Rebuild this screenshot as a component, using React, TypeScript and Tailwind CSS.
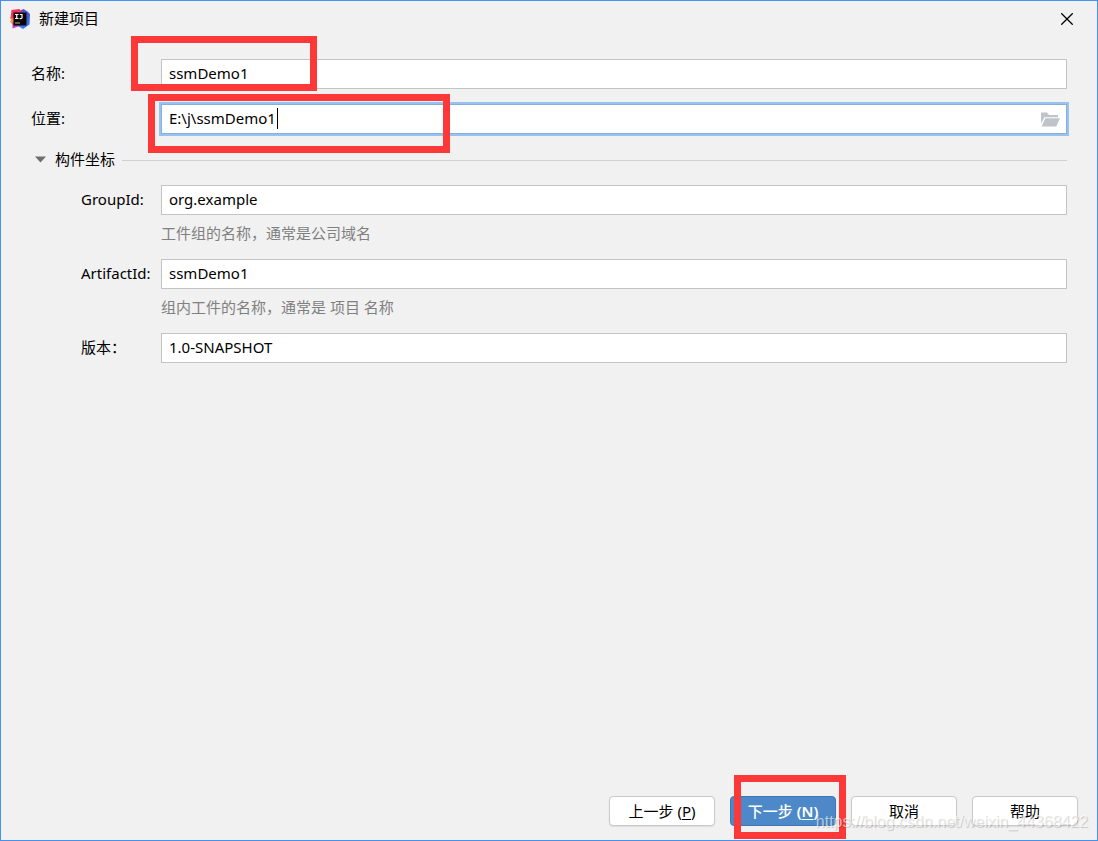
import { useState } from "react";
import type { ReactNode } from "react";

const fieldBase =
  "block h-[30px] w-full rounded-none border bg-white px-[7px] pb-[2px] text-[15px] text-black outline-none";

function LogoIcon() {
  return (
    <svg width="20" height="20" viewBox="0 0 20 20" aria-hidden="true">
      <defs>
        <linearGradient id="ij-right" x1="0" y1="0" x2="0" y2="1">
          <stop offset="0" stopColor="#5a50c8" />
          <stop offset="0.450" stopColor="#3a62d8" />
          <stop offset="1" stopColor="#2f80f2" />
        </linearGradient>
      </defs>
      <path d="M9 2 13.500 0 17.500 2.500 20 5 19.500 15.500 13 20 8 17Z" fill="url(#ij-right)" />
      <path d="M0 9 5 6V15L2.500 15.500 0 12.500 1.500 11Z" fill="#fb8a35" />
      <path d="M1.500 1 9.500 0 12 4.500 5 9 0.500 9.500Z" fill="#f8305f" />
      <path d="M2.500 14 5 12 11 16.500 2.500 19.500Z" fill="#c23fc4" />
      <path d="M3.500 3.500h13v13h-13z" fill="#0b0608" />
      <path
        d="M5 5.500h3.500M5 9.500h3.500M6.750 5.500v4M9.800 5.500h2.200v3q0 1.200-1.200 1.200h-1.200"
        stroke="#fff"
        strokeWidth="1.200"
        fill="none"
      />
      <path d="M5 13.500h5v1H5z" fill="#b5b5b5" />
    </svg>
  );
}

function FolderIcon() {
  return (
    <svg width="19" height="15" viewBox="0 0 19 15" aria-hidden="true" fill="#bec4c9">
      <path d="M0 0.500H6L8 3H17V5.200H3.500L0 11.500Z" />
      <path d="M4.300 6.300H19L15.300 14.500H0.600Z" />
    </svg>
  );
}

function Highlight({ className }: { className: string }) {
  return (
    <div
      aria-hidden="true"
      className={`pointer-events-none absolute z-10 border-[7px] border-[#fc3838] ${className}`}
    />
  );
}

type RowProps = {
  id: string;
  label: string;
  nested?: boolean;
  focused?: boolean;
  initial: string;
  hint?: string;
  children?: ReactNode;
};

function FieldRow({ id, label, nested, focused, initial, hint, children }: RowProps) {
  const [value, setValue] = useState(initial);
  return (
    <div className={nested ? "flex pl-[50px]" : "flex"}>
      <label
        htmlFor={id}
        className={`shrink-0 whitespace-nowrap leading-[28px] ${nested ? "w-[80px]" : "w-[130px]"}`}
      >
        {label}
      </label>
      <div className="relative min-w-0 flex-1">
        <input
          id={id}
          type="text"
          value={value}
          onChange={(e) => setValue(e.target.value)}
          className={`${fieldBase} ${
            focused ? "border-[#87afda] ring-[2px] ring-[#97c3f3]" : "border-[#c4c4c4]"
          }`}
        />
        {hint && <p className="mt-2 leading-[21px] text-[#808080]">{hint}</p>}
        {children}
      </div>
    </div>
  );
}

const buttonBase = "h-[30px] w-[106px] rounded-[4px] border text-[15px] leading-[28px]";
const plainButton = `${buttonBase} border-[#c9c9c9] bg-white text-black shadow-[0_1px_1px_#dddddd]`;

export default function App() {
  return (
    <div className="relative flex min-h-screen flex-col border border-[#4392f1] bg-[#f1f1f1] font-['Noto_Sans','Noto_Sans_CJK_SC',sans-serif] text-[15px] text-black">
      <header className="flex h-[37px] items-center pb-[2px] pl-[9px] pr-6">
        <LogoIcon />
        <h1 className="ml-[9px] flex-1">新建项目</h1>
        <button type="button" aria-label="关闭" className="flex h-3 w-3">
          <svg width="12" height="12" viewBox="0 0 12 12" aria-hidden="true">
            <path d="M0.300 0.300 11.700 11.700M11.700 0.300 0.300 11.700" stroke="#000" strokeWidth="1.300" />
          </svg>
        </button>
      </header>

      <main className="flex flex-1 flex-col gap-[15px] px-[30px] pt-[21px]">
        <FieldRow id="name" label="名称:" initial="ssmDemo1">
          <Highlight className="-left-[30px] -top-[23px] h-[55px] w-[186px]" />
        </FieldRow>
        <FieldRow id="location" label="位置:" initial="E:\j\ssmDemo1" focused>
          <span aria-hidden="true" className="absolute left-[116px] top-1 h-[21px] w-px bg-black" />
          <button type="button" aria-label="浏览" className="absolute right-[7px] top-2 flex">
            <FolderIcon />
          </button>
          <Highlight className="-left-[13px] -top-[10px] h-[59px] w-[302px]" />
        </FieldRow>

        <div className="flex h-[21px] items-center">
          <button type="button" aria-expanded="true" className="flex items-center gap-[9px] pl-1">
            <svg width="11" height="7" viewBox="0 0 11 7" aria-hidden="true">
              <path d="M0 0.500H11L5.500 6.500Z" fill="#6e6e6e" />
            </svg>
            构件坐标
          </button>
          <div className="ml-[7px] mt-[2px] h-px flex-1 bg-[#d1d1d1]" />
        </div>

        <FieldRow nested id="group" label="GroupId:" initial="org.example" hint="工件组的名称，通常是公司域名" />
        <FieldRow nested id="artifact" label="ArtifactId:" initial="ssmDemo1" hint="组内工件的名称，通常是 项目 名称" />
        <FieldRow nested id="version" label="版本：" initial="1.0-SNAPSHOT" />
      </main>

      <footer className="flex justify-end gap-[15px] pb-[14px] pr-[19px]">
        <button type="button" className={plainButton}>
          上一步 (<u className="underline-offset-2">P</u>)
        </button>
        <div className="relative">
          <button
            type="button"
            className={`${buttonBase} border-[#3d75b6] bg-[#4d89c9] font-medium text-white`}
          >
            下一步 <span className="font-semibold">(<u className="underline-offset-2">N</u>)</span>
          </button>
          <Highlight className="-top-[21px] left-1 h-[64px] w-[112px]" />
        </div>
        <button type="button" className={plainButton}>取消</button>
        <button type="button" className={plainButton}>帮助</button>
      </footer>

      <p className="pointer-events-none absolute bottom-2 right-[9px] z-20 font-['Liberation_Sans',sans-serif] text-[16px] leading-5 text-white/60 [text-shadow:1px_1px_1px_rgba(0,0,0,0.18)]">
        https://blog.csdn.net/weixin_44368422
      </p>
    </div>
  );
}
